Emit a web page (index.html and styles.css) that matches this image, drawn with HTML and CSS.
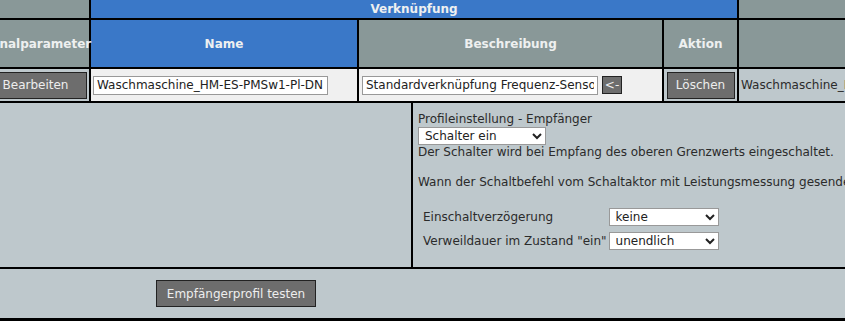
FILE: index.html
```html
<!DOCTYPE html>
<html lang="de">
<head>
  <meta charset="UTF-8">
  <title>Direkte Verknüpfung</title>
  <link rel="stylesheet" href="styles.css">
</head>
<body>

<div class="viewport">
  <table class="links">
    <colgroup>
      <col class="c-param">
      <col class="c-name">
      <col class="c-desc">
      <col class="c-act">
      <col class="c-rest">
    </colgroup>
    <tr class="group">
      <th class="grey"></th>
      <th class="blue" colspan="3">Verknüpfung</th>
      <th class="grey"></th>
    </tr>
    <tr class="heads">
      <th class="grey">Kanalparameter</th>
      <th class="blue">Name</th>
      <th class="grey">Beschreibung</th>
      <th class="grey">Aktion</th>
      <th class="grey"></th>
    </tr>
    <tr class="entry">
      <td class="muted center"><button class="btn btn-edit">Bearbeiten</button></td>
      <td class="light"><input class="field f-name" type="text" value="Waschmaschine_HM-ES-PMSw1-Pl-DN"></td>
      <td class="light"><input class="field f-desc" type="text" value="Standardverknüpfung Frequenz-Sensor"> <button class="btn tiny">&lt;-</button></td>
      <td class="muted center"><button class="btn btn-del">Löschen</button></td>
      <td class="muted rest">Waschmaschine_HM-ES-PMSw1-Pl-DN</td>
    </tr>
    <tr class="profile-row">
      <td colspan="5" class="profile-cell">
        <div class="profile">
          <div class="profile-left"></div>
          <div class="profile-right">
            <div>Profileinstellung - Empfänger</div>
            <select class="sel sel-profile">
              <option>Schalter ein</option>
            </select>
            <div>Der Schalter wird bei Empfang des oberen Grenzwerts eingeschaltet.</div>
            <div class="gap">Wann der Schaltbefehl vom Schaltaktor mit Leistungsmessung gesendet wird, hängt von den Einstellungen des Senders ab.</div>
            <table class="params">
              <tr>
                <td>Einschaltverzögerung</td>
                <td><select class="sel sel-param"><option>keine</option></select></td>
              </tr>
              <tr>
                <td>Verweildauer im Zustand "ein"</td>
                <td><select class="sel sel-param"><option>unendlich</option></select></td>
              </tr>
            </table>
          </div>
        </div>
      </td>
    </tr>
    <tr class="foot-row">
      <td colspan="5" class="foot">
        <button class="btn btn-test">Empfängerprofil testen</button>
      </td>
    </tr>
  </table>
</div>

</body>
</html>
```

FILE: styles.css
```css
:root {
  --blue: #3a78c8;
  --grey: #899898;
  --panel: #bec8cc;
  --light: #f0f0f0;
  --text: #2b2b2b;
}
body {
  margin: 0;
  background-color: #000;
  color: var(--text);
  font-family: "DejaVu Sans", Verdana, sans-serif;
  font-size: 12px;
}
.viewport {
  width: 845px;
  height: 321px;
  overflow: hidden;
}
.links {
  margin-left: -20px;
  border-collapse: collapse;
  table-layout: fixed;
  width: 1020px;
}
.c-param { width: 109px; }
.c-name { width: 268px; }
.c-desc { width: 305px; }
.c-act { width: 75px; }
.c-rest { width: 263px; }

.links > tbody > tr > th,
.links > tbody > tr > td {
  border: 2px solid #000;
  padding: 0;
}
.links > tbody > tr.group > th {
  border-top: none;
}
th {
  color: #eef0f0;
  font-weight: bold;
  text-align: center;
}
.blue { background-color: var(--blue); }
.grey { background-color: var(--grey); }
.muted { background-color: var(--panel); }
.light { background-color: var(--light); }
.center { text-align: center; }

.group > th { height: 18px; }
.heads > th { height: 47px; }
.entry > td { height: 32px; }

.btn {
  height: 27px;
  padding: 0;
  background-color: #6d6d6d;
  color: #eee;
  border: 1px solid #222;
  font-family: inherit;
  font-size: 12px;
  cursor: pointer;
  vertical-align: middle;
}
.btn-edit { width: 102px; }
.btn-del { width: 68px; }
.btn.tiny {
  height: 18px;
  padding: 0 2px;
}
.field {
  height: 19px;
  padding: 0 3px;
  border: 1px solid #999;
  background: #fff;
  color: #222;
  font-family: inherit;
  font-size: 12px;
  box-sizing: border-box;
  vertical-align: middle;
}
.f-name {
  width: 235px;
  margin-left: 2px;
}
.f-desc {
  width: 236px;
  margin-left: 3px;
}
.rest {
  white-space: nowrap;
  overflow: hidden;
  padding-left: 2px !important;
}

.profile-cell {
  height: 164px;
  vertical-align: top;
  background-color: var(--panel);
}
.profile {
  display: flex;
  height: 100%;
}
.profile-left {
  flex-shrink: 0;
  width: 429px;
  border-right: 2px solid #000;
}
.profile-right {
  padding: 9px 0 0 5px;
  white-space: nowrap;
  line-height: 15px;
}
.gap { margin-top: 15px; }
.sel {
  height: 18px;
  border: 1px solid #999;
  background: #fff;
  color: #222;
  font-family: inherit;
  font-size: 12px;
  padding: 0 2px;
}
.sel-profile { width: 128px; }
.sel-param { width: 110px; }
.params {
  margin-top: 15px;
  border-collapse: collapse;
}
.params td { padding: 3px 2px 3px 5px; }
.params td + td { padding-left: 0; }

.foot {
  height: 49px;
  background-color: var(--panel);
}
.btn-test {
  width: 160px;
  margin-left: 174px;
}
```
